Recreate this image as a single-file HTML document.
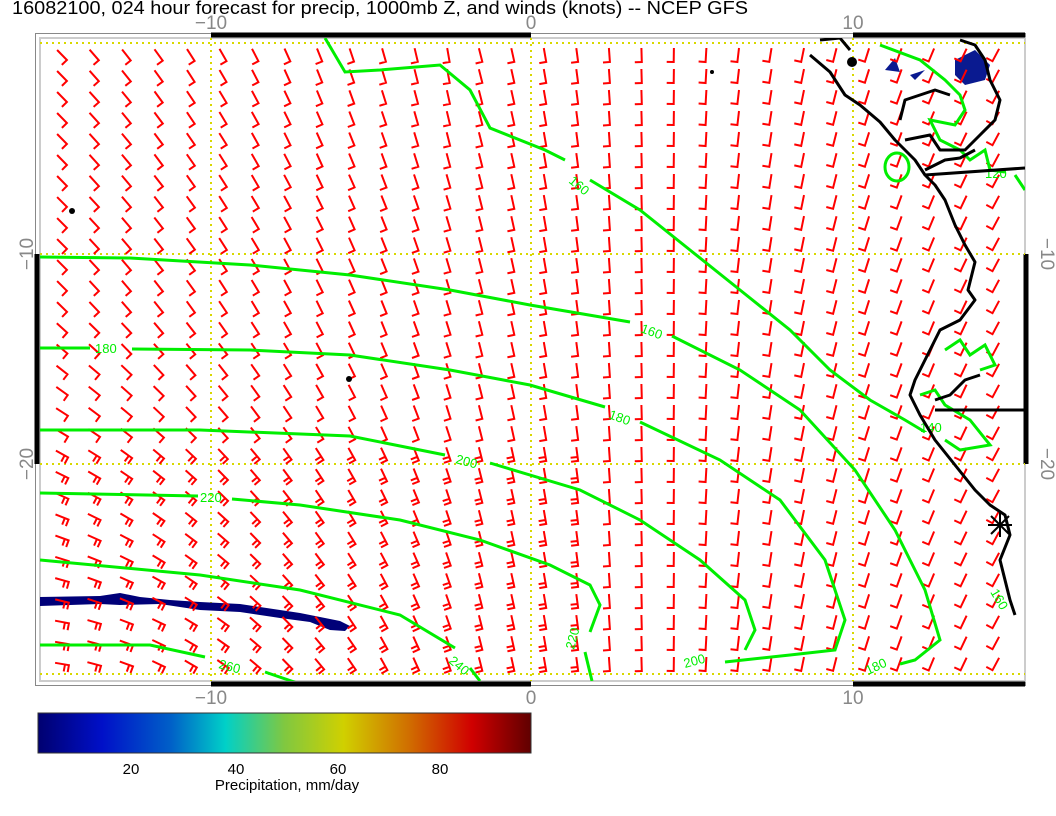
<!DOCTYPE html>
<html><head><meta charset="utf-8"><style>
html,body{margin:0;padding:0;background:#fff;width:1056px;height:816px;overflow:hidden}
svg{display:block;font-family:"Liberation Sans",sans-serif}
</style></head><body>
<svg id="s" width="1056" height="816" viewBox="0 0 1056 816" xmlns="http://www.w3.org/2000/svg">
<defs>
<linearGradient id="cb" x1="0" x2="1" y1="0" y2="0">
<stop offset="0" stop-color="#000070"/><stop offset="0.13" stop-color="#0010c8"/><stop offset="0.27" stop-color="#0060c8"/><stop offset="0.38" stop-color="#00d0c8"/><stop offset="0.5" stop-color="#80c840"/><stop offset="0.62" stop-color="#d0d000"/><stop offset="0.75" stop-color="#d07000"/><stop offset="0.88" stop-color="#d00000"/><stop offset="1" stop-color="#600000"/>
</linearGradient>
<clipPath id="clip"><rect x="40" y="38" width="985" height="643"/></clipPath>
</defs>
<text x="12" y="14" font-size="18" fill="#000" textLength="736" lengthAdjust="spacingAndGlyphs">16082100, 024 hour forecast for precip, 1000mb Z, and winds (knots) -- NCEP GFS</text>
<rect x="35.5" y="33.5" width="990" height="652" fill="none" stroke="#888" stroke-width="1"/>
<rect x="40" y="38" width="985" height="643" fill="none" stroke="#ccc" stroke-width="2"/>
<g stroke="#000" stroke-width="5">
<line x1="211" y1="35" x2="531" y2="35"/><line x1="853" y1="35" x2="1025" y2="35"/>
<line x1="211" y1="684" x2="531" y2="684"/><line x1="853" y1="684" x2="1025" y2="684"/>
<line x1="37" y1="254" x2="37" y2="464"/><line x1="1026" y1="254" x2="1026" y2="464"/>
</g>
<g fill="#888" font-size="19" text-anchor="middle">
<text x="211" y="29">−10</text><text x="531" y="29">0</text><text x="853" y="29">10</text>
<text x="211" y="704">−10</text><text x="531" y="704">0</text><text x="853" y="704">10</text>
<text transform="translate(33,254) rotate(-90)">−10</text><text transform="translate(33,464) rotate(-90)">−20</text>
<text transform="translate(1041,254) rotate(90)">−10</text><text transform="translate(1041,464) rotate(90)">−20</text>
</g>
<g clip-path="url(#clip)">
<g stroke="#d8d800" stroke-width="2" stroke-dasharray="2,4" fill="none">
<line x1="40" y1="43" x2="1025" y2="43"/><line x1="40" y1="254" x2="1025" y2="254"/><line x1="40" y1="464" x2="1025" y2="464"/><line x1="40" y1="674" x2="1025" y2="674"/>
<line x1="211" y1="38" x2="211" y2="681"/><line x1="531" y1="38" x2="531" y2="681"/><line x1="853" y1="38" x2="853" y2="681"/>
</g>
<path d="M40,597 L100,596 L120,593 L140,597 L170,600 L200,602 L240,604 L280,610 L300,613 L320,617 L340,621 L350,626 L345,631 L330,630 L310,622 L280,618 L240,612 L200,610 L160,604 L120,605 L100,604 L40,606 Z" fill="#000078"/>
<path d="M955,60 L975,50 L990,65 L985,80 L965,85 L955,75 Z M885,70 L895,58 L900,72 Z M910,75 L925,70 L915,80Z" fill="#0a1a90"/>
<g id="barbs" stroke="#ff0000" stroke-width="2" fill="none"></g>
<g stroke="#00ee00" stroke-width="3" fill="none">
<polyline points="325,38 345,72 380,70 440,65 470,90 490,128 545,150 565,160"/>
<polyline points="590,180 640,210 690,250 740,290 790,330 830,370 870,400 905,420 925,432"/>
<polyline points="40,257 130,258 250,265 350,275 450,290 530,305 630,322"/>
<polyline points="672,336 740,370 800,410 855,470 895,530 925,590 940,640 915,660 900,664"/>
<polyline points="40,348 90,348"/><polyline points="132,349 250,350 350,355 450,370 530,385 605,407"/>
<polyline points="640,422 720,460 780,500 825,560 845,620 835,650 790,655 725,662"/>
<polyline points="40,430 200,430 350,436 445,455"/><polyline points="490,463 580,490 640,520 700,560 745,600 755,630 745,650"/>
<polyline points="40,493 198,496"/><polyline points="232,499 300,505 400,520 480,540 550,565 590,585 600,605 590,632"/>
<polyline points="585,652 592,681"/>
<polyline points="40,560 200,575 300,590 400,615 455,648"/><polyline points="470,668 480,681"/>
<polyline points="40,645 150,645 205,657"/><polyline points="265,672 300,684"/>
<ellipse cx="897" cy="167" rx="12" ry="14"/>
<polyline points="880,45 920,60 945,80 960,95 965,110 955,125 930,120 940,140 960,150 970,160 985,150 990,170 1005,172"/>
<polyline points="1015,175 1025,190"/>
<polyline points="945,350 960,340 970,355 985,345 995,365 980,370"/>
<polyline points="920,395 935,390 945,405 970,420 990,445 960,450 945,440"/>
</g>
<g fill="#00ee00" font-size="13">
<text x="568" y="182" transform="rotate(40 568 182)">160</text>
<text x="640" y="332" transform="rotate(20 640 332)">160</text>
<text x="95" y="353">180</text>
<text x="608" y="418" transform="rotate(20 608 418)">180</text>
<text x="455" y="463" transform="rotate(15 455 463)">200</text>
<text x="685" y="668" transform="rotate(-15 685 668)">200</text>
<text x="200" y="502">220</text>
<text x="574" y="650" transform="rotate(-75 574 650)">220</text>
<text x="448" y="662" transform="rotate(40 448 662)">240</text>
<text x="218" y="668" transform="rotate(15 218 668)">260</text>
<text x="868" y="675" transform="rotate(-25 868 675)">180</text>
<text x="990" y="592" transform="rotate(60 990 592)">160</text>
<text x="985" y="178">120</text>
<text x="920" y="432">140</text>
</g>
<g stroke="#000" stroke-width="3" fill="none" stroke-linejoin="round">
<polyline points="810,55 830,72 845,95 860,105 880,122 895,140 915,160 925,175 935,185 945,200 955,225 965,245 975,262 968,290 975,300 960,320 940,330 935,340 925,360 915,380 910,395 920,415 935,440 955,465 975,490 990,505 1005,515 1010,535 1000,560 1005,580 1010,600 1015,615"/>
<polyline points="925,175 1025,168"/><polyline points="935,410 1025,410"/>
<polyline points="905,140 930,135 940,150 965,150 980,135 995,120 1000,100 990,80 985,60 975,45 960,40"/>
<polyline points="900,120 905,100 920,95 935,90 950,95"/>
<polyline points="925,170 945,160 960,158 975,150"/>
<polyline points="935,400 950,395 965,380 980,375"/>
<polyline points="820,40 840,38 850,50"/>
</g>
<g fill="#000"><circle cx="72" cy="211" r="3"/><circle cx="349" cy="379" r="3"/><circle cx="712" cy="72" r="2"/><circle cx="852" cy="62" r="5"/></g>
<g stroke="#000" stroke-width="2"><line x1="988" y1="525" x2="1012" y2="525"/><line x1="1000" y1="513" x2="1000" y2="537"/><line x1="991" y1="516" x2="1009" y2="534"/><line x1="991" y1="534" x2="1009" y2="516"/></g>
</g>
<rect x="38" y="713" width="493" height="40" fill="url(#cb)" stroke="#333" stroke-width="1"/>
<g font-size="15" fill="#000" text-anchor="middle">
<text x="131" y="774">20</text><text x="236" y="774">40</text><text x="338" y="774">60</text><text x="440" y="774">80</text>
<text x="287" y="790">Precipitation, mm/day</text>
</g>
</svg>
<script>
(function(){
var g=document.getElementById('barbs'),ns='http://www.w3.org/2000/svg',d='';
for(var r=0;r<31;r++){for(var c=0;c<31;c++){
var x=62+c*32.2,y=55+r*21;
if(x>1020||y>682)continue;
var t=(x-62)/960;
var a;
if(t<0.5){a=45-(t/0.5)*35;}else{a=10-((t-0.5)/0.5)*40;}
if(x<480&&y>300){a+=Math.min(40,(y-300)/370*45)*(1-x/480);}
if(x<480&&y<200){a-=10*(1-y/200)*(x/480);}
var rad=a*Math.PI/180;
var dx=Math.sin(rad),dy=Math.cos(rad);
var L=14,x1=x-dx*L/2,y1=y-dy*L/2,x2=x+dx*L/2,y2=y+dy*L/2;
var fx=-dy,fy=dx,F=7;
d+='M'+x1.toFixed(1)+','+y1.toFixed(1)+'L'+x2.toFixed(1)+','+y2.toFixed(1)+'L'+(x2+fx*F).toFixed(1)+','+(y2+fy*F).toFixed(1);
if(x<600&&y>440){var x3=x2-dx*4,y3=y2-dy*4;d+='M'+x3.toFixed(1)+','+y3.toFixed(1)+'L'+(x3+fx*F).toFixed(1)+','+(y3+fy*F).toFixed(1);}
}}
var p=document.createElementNS(ns,'path');p.setAttribute('d',d);g.appendChild(p);
})();
</script>
</body></html>
